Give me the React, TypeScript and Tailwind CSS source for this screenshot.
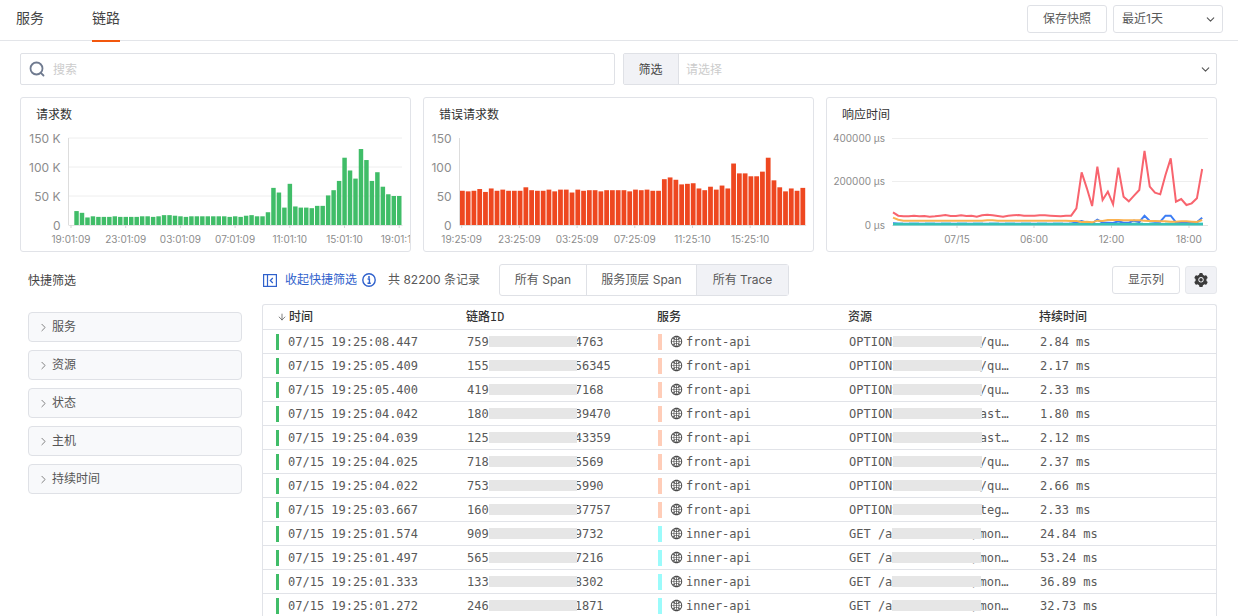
import React from 'react'
import { ArrowDown, ChevronDown, ChevronRight } from 'lucide-react'
import { AiFillSetting, AiOutlineGlobal } from 'react-icons/ai'

const reqValues = [
  24, 21, 13, 15, 14, 14, 14, 15, 14, 14, 14, 14, 15, 15, 14, 15, 17, 17, 16, 15,
  14, 15, 15, 15, 15, 15, 15, 15, 14, 15, 14, 16, 17, 15, 15, 22, 64, 56, 30, 71,
  32, 30, 30, 29, 33, 33, 51, 60, 76, 116, 94, 80, 131, 112, 76, 91, 66, 53, 50, 50,
]

const errValues = [
  59, 58, 59, 62, 57, 63, 59, 61, 59, 59, 59, 65, 60, 59, 59, 61, 58, 61, 61, 56,
  61, 59, 60, 60, 58, 60, 60, 60, 60, 58, 61, 60, 61, 59, 59, 79, 82, 78, 70, 71,
  72, 63, 60, 66, 61, 68, 63, 106, 89, 89, 84, 84, 92, 116, 77, 65, 58, 63, 59, 64,
]

const redLine = [
  262, 272, 274, 274, 272, 274, 273, 275, 274, 272, 270, 273, 273, 271, 273, 272, 275, 271, 269, 271,
  273, 275, 272, 271, 270, 272, 272, 272, 271, 271, 272, 273, 274, 272, 272, 250, 142, 190, 243, 125,
  225, 200, 238, 128, 215, 229, 212, 195, 78, 185, 203, 208, 150, 100, 230, 222, 240, 235, 220, 132,
]

const orangeLine = [
  278, 284, 287, 287, 287, 287, 287, 287, 287, 287, 287, 287, 287, 287, 287, 287, 287, 287, 286, 286,
  287, 287, 287, 287, 287, 287, 287, 287, 287, 287, 287, 287, 287, 287, 288, 288, 291, 290, 292, 287,
  288, 285, 285, 285, 286, 286, 286, 286, 287, 288, 288, 289, 289, 290, 290, 289, 289, 290, 291, 285,
]

const blueLine = [
  295, 296, 296, 296, 296, 296, 296, 296, 296, 296, 296, 296, 296, 296, 296, 296, 296, 296, 296, 296,
  296, 296, 296, 296, 296, 296, 296, 296, 296, 296, 296, 296, 296, 296, 296, 292, 288, 293, 295, 284,
  293, 293, 294, 289, 293, 293, 287, 291, 272, 288, 290, 290, 272, 272, 292, 294, 292, 294, 292, 278,
]

const rows = [
  { time: '07/15 19:25:08.447', head: '759', tail: '4763', svc: 'front-api', res: 'OPTIONS', end: 'f/qu…', dur: '2.84 ms' },
  { time: '07/15 19:25:05.409', head: '155', tail: '56345', svc: 'front-api', res: 'OPTIONS', end: 'f/qu…', dur: '2.17 ms' },
  { time: '07/15 19:25:05.400', head: '419', tail: '7168', svc: 'front-api', res: 'OPTIONS', end: 'f/qu…', dur: '2.33 ms' },
  { time: '07/15 19:25:04.042', head: '180', tail: '39470', svc: 'front-api', res: 'OPTIONS', end: 'last…', dur: '1.80 ms' },
  { time: '07/15 19:25:04.039', head: '125', tail: '43359', svc: 'front-api', res: 'OPTIONS', end: 'last…', dur: '2.12 ms' },
  { time: '07/15 19:25:04.025', head: '718', tail: '5569', svc: 'front-api', res: 'OPTIONS', end: 'f/qu…', dur: '2.37 ms' },
  { time: '07/15 19:25:04.022', head: '753', tail: '5990', svc: 'front-api', res: 'OPTIONS', end: 'f/qu…', dur: '2.66 ms' },
  { time: '07/15 19:25:03.667', head: '160', tail: '37757', svc: 'front-api', res: 'OPTIONS', end: 'nteg…', dur: '2.33 ms' },
  { time: '07/15 19:25:01.574', head: '909', tail: '9732', svc: 'inner-api', res: 'GET /a', end: '/mon…', dur: '24.84 ms' },
  { time: '07/15 19:25:01.497', head: '565', tail: '7216', svc: 'inner-api', res: 'GET /a', end: '/mon…', dur: '53.24 ms' },
  { time: '07/15 19:25:01.333', head: '133', tail: '8302', svc: 'inner-api', res: 'GET /a', end: '/mon…', dur: '36.89 ms' },
  { time: '07/15 19:25:01.272', head: '246', tail: '1871', svc: 'inner-api', res: 'GET /a', end: '/mon…', dur: '32.73 ms' },
]

const filters = ['服务', '资源', '状态', '主机', '持续时间']

const Card = ({ title, children }: { title: string; children: React.ReactNode }) => (
  <div className="h-[155px] overflow-hidden rounded-[3px] border border-[#e1e3e8] bg-white">
    <div className="h-[27px] pl-[15px] pt-[8px] text-xs leading-[17px] text-[#333]">{title}</div>
    {children}
  </div>
)

type BarProps = {
  left: number
  axisX: number
  start: number
  pitch: number
  values: number[]
  color: string
  yLabels: string[]
  ticks: { x: number; label: string }[]
  gridEnd?: number
}

// all chart coordinates are page pixels, the viewBox shifts them into the card
const BarChart = ({ left, axisX, start, pitch, values, color, yLabels, ticks, gridEnd }: BarProps) => (
  <svg width={389} height={126} viewBox={`${left + 1} 125 389 126`} className="block">
    {[138, 167, 196].map((y) =>
      gridEnd ? <line key={y} x1={axisX} x2={gridEnd} y1={y} y2={y} stroke="#eeeeee" /> : null,
    )}
    <line x1={axisX} x2={axisX} y1={138} y2={225} stroke="#dddddd" />
    <line x1={axisX} x2={start + pitch * 60} y1={225.5} y2={225.5} stroke="#e3e3e3" />
    {values.map((v, i) => {
      const h = v * 0.58
      return <rect key={i} x={start + i * pitch} y={225 - h} width={pitch - 1} height={h} fill={color} />
    })}
    {yLabels.map((t, i) => (
      <text key={t} x={axisX - 8} y={142.5 + i * 29} textAnchor="end" fontSize={12} fill="#8c8c8c">
        {t}
      </text>
    ))}
    {ticks.map((t) => (
      <g key={t.label}>
        <line x1={t.x} x2={t.x} y1={225} y2={228} stroke="#d5d5d5" />
        <text x={t.x} y={243} textAnchor="middle" fontSize={10} fill="#8c8c8c">
          {t.label}
        </text>
      </g>
    ))}
  </svg>
)

const toPoints = (zs: number[]) =>
  zs.map((z, i) => `${893 + i * 5.24},${125 + z / 3}`).join(' ')

const LineChart = () => (
  <svg width={389} height={126} viewBox="827 125 389 126" className="block">
    {[138.5, 181.5].map((y) => (
      <line key={y} x1={892} x2={1208} y1={y} y2={y} stroke="#eeeeee" />
    ))}
    <line x1={892} x2={1208} y1={225.5} y2={225.5} stroke="#e3e3e3" />
    {['400000 µs', '200000 µs', '0 µs'].map((t, i) => (
      <text key={t} x={885} y={142 + i * 43.3} textAnchor="end" fontSize={10} fill="#8c8c8c">
        {t}
      </text>
    ))}
    {[
      { x: 957, label: '07/15' },
      { x: 1034, label: '06:00' },
      { x: 1111.5, label: '12:00' },
      { x: 1189, label: '18:00' },
    ].map((t) => (
      <g key={t.label}>
        <line x1={t.x} x2={t.x} y1={225} y2={228} stroke="#d5d5d5" />
        <text x={t.x} y={243} textAnchor="middle" fontSize={10} fill="#8c8c8c">
          {t.label}
        </text>
      </g>
    ))}
    <line x1={893} x2={1203} y1={223} y2={223} stroke="#9fe6e6" strokeWidth={1.5} strokeDasharray="10 6" />
    <polyline points={toPoints(blueLine)} fill="none" stroke="#3c7df5" strokeWidth={2} />
    <line x1={893} x2={1203} y1={224.2} y2={224.2} stroke="#36c2b8" strokeWidth={2.4} />
    <polyline points={toPoints(orangeLine)} fill="none" stroke="#fbb24f" strokeWidth={2} />
    <polyline points={toPoints(redLine)} fill="none" stroke="#f8646e" strokeWidth={2} />
  </svg>
)

const SearchIcon = () => (
  <svg width={16} height={16} viewBox="0 0 16 16" fill="none" stroke="#6f7a8f" strokeWidth={1.8}>
    <circle cx={7.5} cy={7.5} r={6} />
    <path d="M11.8 11.8 L14.5 14.5" strokeLinecap="round" />
  </svg>
)

const CollapseIcon = () => (
  <svg width={14} height={13} viewBox="0 0 14 13" fill="none" stroke="#2f61cc" strokeWidth={1.2}>
    <rect x={0.6} y={0.6} width={12.8} height={11.8} />
    <path d="M4.5 0.5 V12.5" />
    <path d="M9.8 4 L7.3 6.5 L9.8 9" />
  </svg>
)

const InfoIcon = () => (
  <svg width={14} height={14} viewBox="0 0 14 14" fill="none">
    <circle cx={7} cy={7} r={6.2} stroke="#2f61cc" strokeWidth={1.4} />
    <circle cx={7} cy={3.9} r={1} fill="#2f61cc" />
    <path d="M5.6 6 H7.4 V10 M5.5 10.3 H8.8" stroke="#2f61cc" strokeWidth={1.4} />
  </svg>
)

const Blank = ({ w }: { w: string }) => <span className={`relative z-10 h-[11px] shrink-0 bg-[#e6e6e6] ${w}`} />

const App = () => {
  return (
    <div className="h-[616px] w-[1238px] overflow-hidden bg-white font-['Inter','Noto_Sans_CJK_SC',sans-serif] text-xs text-[#595959]">
      {/* TOP BAR */}
      <div className="flex h-[41px] items-start border-b border-[#e3e5e9] pl-4 pr-[15px]">
        <div className="flex h-10 items-center pb-[4px] text-sm text-[#444]">服务</div>
        <div className="relative ml-12 flex h-10 items-center pb-[4px] text-sm text-[#444]">
          链路
          <div className="absolute inset-x-0 -bottom-[2px] h-[2px] bg-[#f2570d]" />
        </div>
        <button className="ml-auto mt-[5px] h-[28px] w-20 rounded-[3px] border border-[#dfe1e6] text-[#595959]">
          保存快照
        </button>
        <div className="ml-[6px] mt-[5px] flex h-[28px] w-[110px] items-center justify-between rounded-[3px] border border-[#dfe1e6] pl-2 pr-[5px] text-[#595959]">
          最近1天
          <ChevronDown size={13} strokeWidth={2} className="text-[#555]" />
        </div>
      </div>

      <div className="pl-5 pr-[21px]">
        {/* SEARCH + FILTER */}
        <div className="mt-3 grid h-8 grid-cols-[595px_594px] gap-2">
          <div className="flex items-center rounded-[2px] border border-[#dfe1e6] pl-2">
            <SearchIcon />
            <span className="ml-2 pt-[2px] text-[#cccccc]">搜索</span>
          </div>
          <div className="flex items-center rounded-[2px] border border-[#dfe1e6]">
            <div className="flex h-full w-[55px] items-center justify-center border-r border-[#dfe1e6] bg-[#f1f2f6] pt-[2px] pr-[1px] text-[#444]">
              筛选
            </div>
            <span className="ml-[7px] pt-[1px] text-[#cccccc]">请选择</span>
            <ChevronDown size={13} strokeWidth={2} className="ml-auto mr-[4px] text-[#555]" />
          </div>
        </div>

        {/* CHARTS */}
        <div className="mt-3 grid grid-cols-[391px_391px_391px] gap-3">
          <Card title="请求数">
            <BarChart
              left={20}
              axisX={68.5}
              start={74.3}
              pitch={5.47}
              values={reqValues}
              color="#40bd68"
              yLabels={['150 K', '100 K', '50 K', '0']}
              gridEnd={402}
              ticks={[
                { x: 71, label: '19:01:09' },
                { x: 125.7, label: '23:01:09' },
                { x: 180.4, label: '03:01:09' },
                { x: 235.1, label: '07:01:09' },
                { x: 289.8, label: '11:01:10' },
                { x: 344.5, label: '15:01:10' },
                { x: 399.2, label: '19:01:10' },
              ]}
            />
          </Card>
          <Card title="错误请求数">
            <BarChart
              left={423}
              axisX={459.5}
              start={460}
              pitch={5.77}
              values={errValues}
              color="#ee4720"
              yLabels={['150', '100', '50', '0']}
              ticks={[
                { x: 461.7, label: '19:25:09' },
                { x: 519.4, label: '23:25:09' },
                { x: 577.1, label: '03:25:09' },
                { x: 634.8, label: '07:25:09' },
                { x: 692.5, label: '11:25:10' },
                { x: 750.2, label: '15:25:10' },
              ]}
            />
          </Card>
          <Card title="响应时间">
            <LineChart />
          </Card>
        </div>

        {/* LOWER SECTION */}
        <div className="flex">
          <div className="w-[242px] shrink-0 pl-2 pr-5">
            <div className="mt-[21px] h-[39px] leading-4 text-[#444]">快捷筛选</div>
            <div className="flex flex-col gap-2">
              {filters.map((name) => (
                <div
                  key={name}
                  className="flex h-[30px] items-center rounded-[4px] border border-[#dfe1e6] bg-[#f8f9fb] pl-[8px] text-[#555]"
                >
                  <ChevronRight size={13} strokeWidth={1.5} className="text-[#666]" />
                  <span className="ml-[2px]">{name}</span>
                </div>
              ))}
            </div>
          </div>

          <div className="min-w-0 flex-1">
            <div className="mt-3 flex h-8 items-center">
              <div className="ml-px"><CollapseIcon /></div>
              <span className="ml-2 text-[#2f61cc]">收起快捷筛选</span>
              <div className="ml-[5px]"><InfoIcon /></div>
              <span className="ml-3 w-[91px] whitespace-nowrap">共 82200 条记录</span>
              <div className="ml-5 flex h-8 rounded-[3px] border border-[#dfe1e6]">
                <div className="flex w-[87px] items-center justify-center border-r border-[#dfe1e6]">所有 Span</div>
                <div className="flex w-[110px] items-center justify-center border-r border-[#dfe1e6]">服务顶层 Span</div>
                <div className="flex w-[91px] items-center justify-center bg-[#f1f2f6]">所有 Trace</div>
              </div>
              <button className="ml-auto h-7 w-[68px] rounded-[3px] border border-[#dfe1e6] text-[#595959]">显示列</button>
              <div className="ml-[5px] flex h-7 w-8 items-center justify-center rounded-[3px] border border-[#e6e8ec] bg-[#f1f2f6]">
                <AiFillSetting size={16} className="text-[#3b3b3b]" />
              </div>
            </div>

            {/* TABLE */}
            <div className="mt-2 rounded-t-[3px] border-x border-t border-[#e1e3e8] font-['DejaVu_Sans_Mono','Noto_Sans_CJK_SC',monospace]">
              <div className="grid h-[25px] grid-cols-[203px_191px_191px_191px_1fr] items-center border-b border-[#e1e3e8] font-medium text-[#333]">
                <div className="flex items-center pl-[14px]">
                  <ArrowDown size={10} strokeWidth={1.5} />
                  <span className="ml-[2px]">时间</span>
                </div>
                <div className="pl-[0px]">链路ID</div>
                <div>服务</div>
                <div>资源</div>
                <div>持续时间</div>
              </div>
              {rows.map((r) => (
                <div
                  key={r.time}
                  className="grid h-6 grid-cols-[203px_191px_191px_191px_1fr] items-center border-b border-[#e1e3e8]"
                >
                  <div className="flex items-center pl-[13px]">
                    <span className="h-4 w-[3px] bg-[#40bd68]" />
                    <span className="ml-[9px]">{r.time}</span>
                  </div>
                  <div className="flex items-center pl-[1px]">
                    <span>{r.head}</span>
                    <Blank w="w-[88px]" />
                    <span className="-ml-[2px]">{r.tail}</span>
                  </div>
                  <div className="flex items-center pl-px">
                    <span className={r.svc === 'front-api' ? 'h-4 w-1 bg-[#ffcdb8]' : 'h-4 w-1 bg-[#9bfbfb]'} />
                    <AiOutlineGlobal size={13} className="ml-[8px] text-[#444]" />
                    <span className="ml-[3px]">{r.svc}</span>
                  </div>
                  <div className="flex items-center pl-px">
                    <span>{r.res}</span>
                    <Blank w={r.res === 'OPTIONS' ? '-ml-[7px] w-[89px]' : 'w-[89px]'} />
                    <span className="-ml-[9px]">{r.end}</span>
                  </div>
                  <div className="pl-px">{r.dur}</div>
                </div>
              ))}
            </div>
          </div>
        </div>
      </div>
    </div>
  )
}

export default App
